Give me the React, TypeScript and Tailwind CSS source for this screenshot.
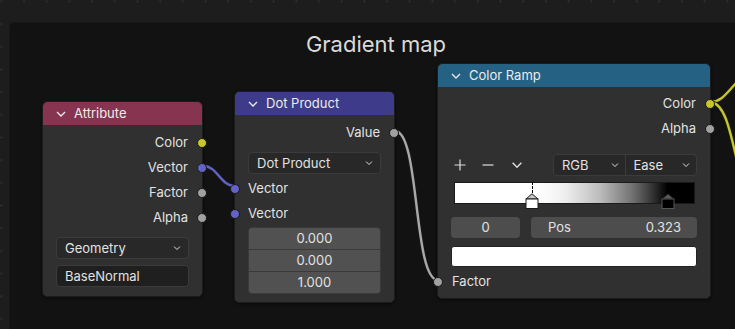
import React from "react";

type SocketColor = "yellow" | "blue" | "gray";

const socketClass: Record<SocketColor, string> = {
  yellow: "bg-[#c7c729]",
  blue: "bg-[#6363c7]",
  gray: "bg-[#a1a1a1]",
};

function Socket({ color, side }: { color: SocketColor; side: "left" | "right" }) {
  return (
    <span
      className={`absolute top-1/2 -translate-y-1/2 w-[10px] h-[10px] rounded-full border border-[#1a1a1a] ${socketClass[color]} ${
        side === "right" ? "right-[-5px]" : "left-[-5px]"
      }`}
    />
  );
}

function Chevron({ className = "" }: { className?: string }) {
  return (
    <svg width="10" height="6" viewBox="0 0 10 6" className={className}>
      <path d="M1 1 L5 5 L9 1" fill="none" stroke="currentColor" strokeWidth="1.3" />
    </svg>
  );
}

function Header({ title, color }: { title: string; color: string }) {
  return (
    <div className={`h-[23px] flex items-center gap-[8px] pl-[13px] rounded-t-[5px] text-[#ececec] ${color}`}>
      <Chevron />
      <span>{title}</span>
    </div>
  );
}

function OutRow({ label, color }: { label: string; color: SocketColor }) {
  return (
    <div className="relative h-[25px] flex items-center justify-end pr-[14px]">
      {label}
      <Socket color={color} side="right" />
    </div>
  );
}

function InRow({ label, color, pl = "pl-[13px]" }: { label: string; color: SocketColor; pl?: string }) {
  return (
    <div className={`relative h-[25px] flex items-center ${pl}`}>
      {label}
      <Socket color={color} side="left" />
    </div>
  );
}

function Dropdown({ label, className = "" }: { label: string; className?: string }) {
  return (
    <div
      className={`flex items-center justify-between pl-[8px] pr-[6px] bg-[#282828] border border-[#3b3b3b] rounded-[4px] ${className}`}
    >
      <span>{label}</span>
      <Chevron className="scale-75" />
    </div>
  );
}

function AttributeNode() {
  return (
    <div className="absolute left-[42px] top-[101px] w-[161px] bg-[#303030] rounded-[5px] border border-[#1c1c1c] shadow-[0_1px_3px_rgba(0,0,0,0.5)]">
      <Header title="Attribute" color="bg-[#873450]" />
      <div className="pt-[5px] pb-[9px]">
        <OutRow label="Color" color="yellow" />
        <OutRow label="Vector" color="blue" />
        <OutRow label="Factor" color="gray" />
        <OutRow label="Alpha" color="gray" />
        <div className="px-[13px] mt-[7px] flex flex-col gap-[6px]">
          <Dropdown label="Geometry" className="h-[22px]" />
          <div className="h-[22px] flex items-center pl-[8px] bg-[#1f1f1f] border border-[#3b3b3b] rounded-[4px]">
            BaseNormal
          </div>
        </div>
      </div>
    </div>
  );
}

function DotProductNode() {
  return (
    <div className="absolute left-[234px] top-[91px] w-[161px] bg-[#303030] rounded-[5px] border border-[#1c1c1c] shadow-[0_1px_3px_rgba(0,0,0,0.5)]">
      <Header title="Dot Product" color="bg-[#3e3c8a]" />
      <div className="pt-[5px] pb-[8px]">
        <OutRow label="Value" color="gray" />
        <div className="px-[13px] mt-[7px]">
          <Dropdown label="Dot Product" className="h-[22px]" />
        </div>
        <div className="mt-[2px]">
          <InRow label="Vector" color="blue" />
          <InRow label="Vector" color="blue" />
        </div>
        <div className="px-[13px] mt-[1px]">
          <div className="flex flex-col rounded-[4px] overflow-hidden border border-[#3a3a3a] bg-[#3a3a3a] gap-[1px]">
            {["0.000", "0.000", "1.000"].map((v, i) => (
              <div key={i} className="h-[21px] flex items-center justify-center bg-[#515151]">
                {v}
              </div>
            ))}
          </div>
        </div>
      </div>
    </div>
  );
}

function StopMarker({ x, selected }: { x: string; selected: boolean }) {
  return (
    <div className={`absolute top-0 ${x} w-[14px] h-[27px] -translate-x-1/2`}>
      <div className="absolute left-[6.5px] top-0 h-[11px] border-l border-dashed border-black" />
      <svg width="14" height="16" viewBox="0 0 14 16" className="absolute left-0 top-[11px]">
        <path d="M1 6 L7 0.8 L13 6 Z" fill={selected ? "#c8c8c8" : "#5a5a5a"} stroke="#1a1a1a" strokeWidth="1" />
        <rect x="1" y="6" width="12" height="9.5" fill={selected ? "#ffffff" : "#000000"} stroke={selected ? "#1a1a1a" : "#555"} strokeWidth="1" />
      </svg>
    </div>
  );
}

function ColorRampNode() {
  return (
    <div className="absolute left-[437px] top-[63px] w-[274px] bg-[#303030] rounded-[5px] border border-[#1c1c1c] shadow-[0_1px_3px_rgba(0,0,0,0.5)]">
      <Header title="Color Ramp" color="bg-[#246183]" />
      <div className="pt-[4px] pb-[4px]">
        <OutRow label="Color" color="yellow" />
        <OutRow label="Alpha" color="gray" />
        <div className="mt-[13px] pl-[16px] pr-[13px] flex items-center h-[22px]">
          <svg width="12" height="12" viewBox="0 0 12 12" className="text-[#dcdcdc]">
            <path d="M6 0.5 V11.5 M0.5 6 H11.5" stroke="currentColor" strokeWidth="1.2" />
          </svg>
          <svg width="12" height="12" viewBox="0 0 12 12" className="ml-[16px] text-[#dcdcdc]">
            <path d="M0.5 6 H11.5" stroke="currentColor" strokeWidth="1.2" />
          </svg>
          <Chevron className="ml-[18px] text-[#dcdcdc] scale-110" />
          <div className="ml-auto w-[144px] h-[22px] flex bg-[#282828] border border-[#3b3b3b] rounded-[4px]">
            <div className="flex-1 flex items-center justify-between pl-[8px] pr-[5px] border-r border-[#3b3b3b]">
              <span>RGB</span>
              <Chevron className="scale-75" />
            </div>
            <div className="flex-1 flex items-center justify-between pl-[8px] pr-[5px]">
              <span>Ease</span>
              <Chevron className="scale-75" />
            </div>
          </div>
        </div>
        <div className="mt-[6px] pl-[16px] pr-[15px]">
          <div className="relative h-[22px]">
            <div className="h-[22px] border border-[#1a1a1a] bg-[linear-gradient(to_right,#ffffff_32.5%,#fbfbfb_38.1%,#ededed_46.6%,#bcbcbc_60.7%,#6e6e6e_74.8%,#2e2e2e_83.3%,#000000_88.9%)]" />
            <StopMarker x="left-[32.5%]" selected />
            <StopMarker x="left-[88.9%]" selected={false} />
          </div>
        </div>
        <div className="mt-[13px] px-[13px] flex gap-[11px] h-[21px]">
          <div className="w-[69px] flex items-center justify-center bg-[#4d4d4d] rounded-[4px]">0</div>
          <div className="flex-1 flex items-center justify-between pl-[17px] pr-[16px] bg-[#4d4d4d] rounded-[4px]">
            <span>Pos</span>
            <span>0.323</span>
          </div>
        </div>
        <div className="mt-[8px] px-[13px]">
          <div className="h-[21px] bg-white rounded-[3px] border border-[#222]" />
        </div>
        <div className="mt-[2px]">
          <InRow label="Factor" color="gray" pl="pl-[14px]" />
        </div>
      </div>
    </div>
  );
}

function Links() {
  return (
    <svg width="735" height="329" className="absolute left-0 top-0 pointer-events-none">
      <g fill="none" strokeLinecap="round">
        <path d="M203 166 C218 166 220 186 235 186" stroke="#1a1a1a" strokeWidth="4" />
        <path d="M203 166 C218 166 220 186 235 186" stroke="#6262c8" strokeWidth="2.4" />
        <path d="M395 131 C420 131 413 280 438 280" stroke="#1a1a1a" strokeWidth="4" />
        <path d="M395 131 C420 131 413 280 438 280" stroke="#a8a8a8" strokeWidth="2.4" />
        <path d="M711 102 C722 102 727 92 740 79" stroke="#1a1a1a" strokeWidth="4" />
        <path d="M711 102 C722 102 727 92 740 79" stroke="#c6c62a" strokeWidth="2.4" />
        <path d="M711 102 C724 104 729 125 738 165" stroke="#1a1a1a" strokeWidth="4" />
        <path d="M711 102 C724 104 729 125 738 165" stroke="#c6c62a" strokeWidth="2.4" />
      </g>
    </svg>
  );
}

export default function App() {
  return (
    <div
      className="relative w-[735px] h-[329px] overflow-hidden bg-[#1d1d1d] bg-[radial-gradient(circle,#2c2c2c_1px,transparent_1.2px)] bg-[length:22.7px_22.7px] bg-[position:-10px_-10px] text-[13px] text-[#e2e2e2] leading-none"
      style={{ fontFamily: "Inter, 'Noto Sans', sans-serif" }}
    >
      <div className="absolute left-[9px] top-[22px] right-[-10px] bottom-[-10px] bg-[#121212] rounded-[5px] border border-[#171717]">
        <div className="pt-[10px] text-center text-[22px] text-[#dadada] pr-[2px]">Gradient map</div>
      </div>
      <Links />
      <AttributeNode />
      <DotProductNode />
      <ColorRampNode />
    </div>
  );
}
